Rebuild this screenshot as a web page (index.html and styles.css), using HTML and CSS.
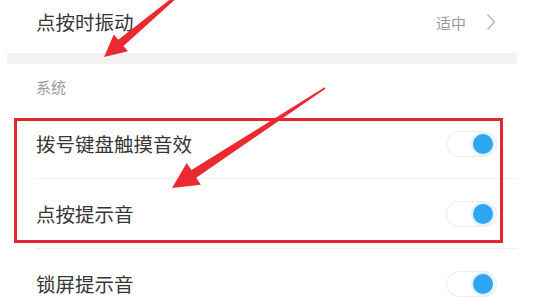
FILE: index.html
```html
<!DOCTYPE html>
<html lang="zh">
<head>
<meta charset="utf-8">
<link rel="stylesheet" href="styles.css">
</head>
<body>
<div class="page">
  <div class="list">
    <div class="row row-top">
      <span class="label">点按时振动</span>
      <span class="value">适中</span>
      <svg class="chev" width="10" height="18" viewBox="0 0 10 18"><polyline points="1.5,1.5 8.5,9 1.5,16.5" fill="none" stroke="#b5b5b5" stroke-width="1.4"/></svg>
    </div>
    <div class="band"></div>
    <div class="section">系统</div>
    <div class="row row-a">
      <span class="label">拨号键盘触摸音效</span>
      <span class="toggle"><span class="knob"></span></span>
    </div>
    <div class="divider"></div>
    <div class="row row-b">
      <span class="label">点按提示音</span>
      <span class="toggle"><span class="knob"></span></span>
    </div>
    <div class="divider"></div>
    <div class="row row-c">
      <span class="label">锁屏提示音</span>
      <span class="toggle"><span class="knob"></span></span>
    </div>
  </div>
  <div class="redbox"></div>
  <svg class="arrows" width="539" height="308" viewBox="0 0 539 308">
    <polygon fill="#ea2a30" points="104,57 113.8,34.5 118.3,39.8 177,-6 179,-4 123.5,46 128,51.3"/>
    <polygon fill="#ea2a30" points="172,188 186.7,163 191.4,170.1 324.6,87.3 325.4,88.7 196.2,177.7 200.9,184.8"/>
  </svg>
</div>
</body>
</html>
```

FILE: styles.css
```css
html, body {
  margin: 0;
  padding: 0;
  background: #ffffff;
}
body {
  font-family: "Noto Sans CJK SC", "Noto Sans", sans-serif;
  color: #363636;
}
.page {
  position: relative;
  width: 539px;
  height: 308px;
  overflow: hidden;
}
.list {
  width: 510px;
  margin-left: 7px;
}
.row {
  display: flex;
  align-items: center;
  box-sizing: border-box;
  padding-left: 29px;
  padding-right: 20px;
}
.label {
  font-size: 19.5px;
  line-height: 1;
  flex: 1;
}
.row-top {
  height: 53px;
  padding-bottom: 9px;
  padding-right: 21px;
}
.value {
  font-size: 15px;
  color: #9a9a9a;
  line-height: 1;
  margin-right: 20px;
}
.chev {
  display: block;
}
.band {
  height: 11px;
  background: #f3f3f3;
}
.section {
  height: 54px;
  box-sizing: border-box;
  padding-left: 29px;
  padding-bottom: 10px;
  display: flex;
  align-items: center;
  font-size: 15px;
  color: #9a9a9a;
}
.row-a {
  height: 60px;
  padding-bottom: 8px;
}
.row-b {
  height: 69px;
}
.row-c {
  height: 70px;
}
.divider {
  height: 1px;
  margin-left: 29px;
  background: #efefef;
}
.toggle {
  position: relative;
  box-sizing: border-box;
  width: 51px;
  height: 26px;
  border: 1px solid #ebebeb;
  border-radius: 13px;
  background: #fff;
}
.knob {
  position: absolute;
  right: 3px;
  top: 2px;
  width: 20px;
  height: 20px;
  border-radius: 50%;
  background: #2ea6f1;
  box-shadow: 0 0 0 2px rgba(46, 166, 241, 0.15);
}
.redbox {
  position: absolute;
  left: 14px;
  top: 118px;
  width: 489px;
  height: 125px;
  box-sizing: border-box;
  border: 3px solid #e3272e;
}
.arrows {
  position: absolute;
  left: 0;
  top: 0;
}
```
